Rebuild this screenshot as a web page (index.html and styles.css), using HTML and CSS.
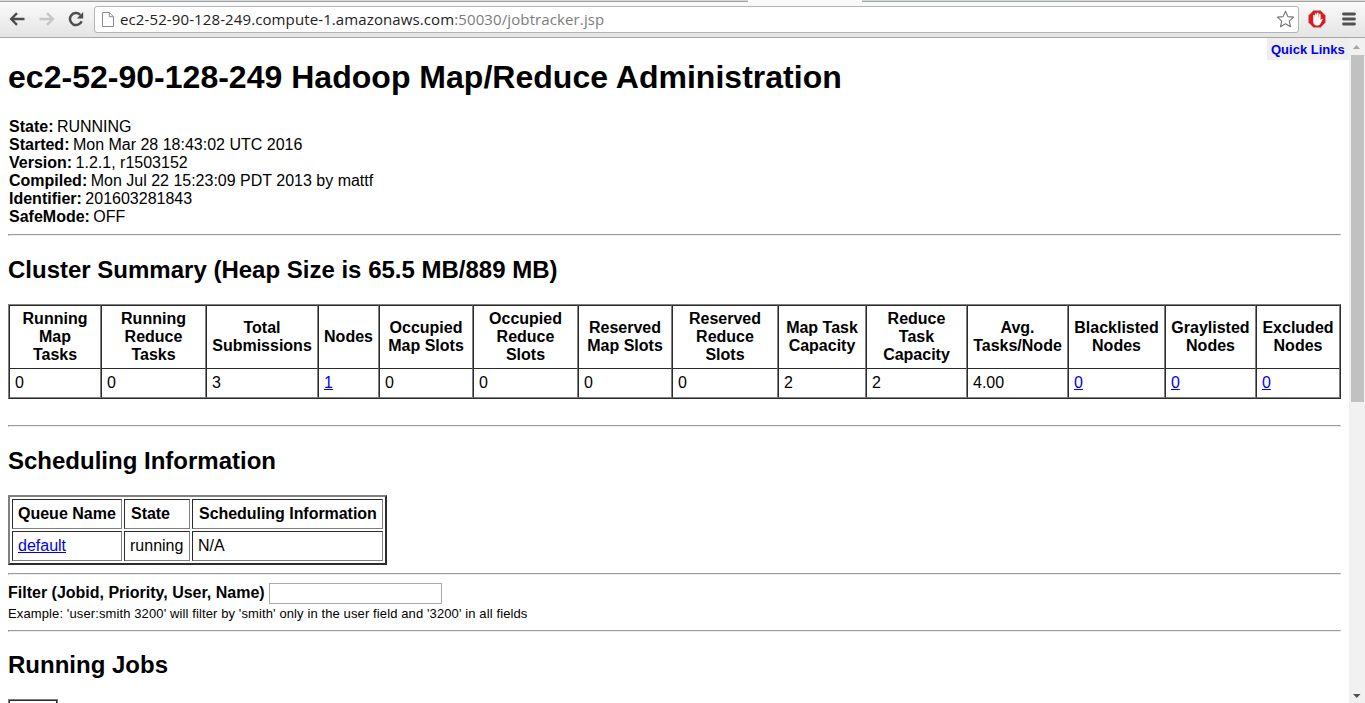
FILE: index.html
```html
<!DOCTYPE html>
<html lang="en">
<head>
<meta charset="utf-8">
<title>ec2-52-90-128-249 Hadoop Map/Reduce Administration</title>
<link rel="stylesheet" href="styles.css">
</head>
<body>
<div class="tabstrip"><span class="tabs tabs-left"></span><span class="tab-active"></span><span class="tabs tabs-right"></span><span class="tab-rest"></span></div>
<header class="toolbar">
  <svg class="nav" width="16" height="16" viewBox="0 0 16 16"><path d="M15.500 8H2.5M8 2.2L2.2 8L8 13.8" fill="none" stroke="#4d4d4d" stroke-width="2.4"/></svg>
  <svg class="nav forward" width="16" height="16" viewBox="0 0 16 16"><path d="M.5 8h13M8 2.2L13.8 8L8 13.8" fill="none" stroke="#c6c6c6" stroke-width="2.4"/></svg>
  <svg class="nav reload" width="16" height="16" viewBox="0 0 16 16"><path d="M13.6 10.2A6 6 0 1 1 12.2 3.8" fill="none" stroke="#4d4d4d" stroke-width="2.5"/><path d="M15.2 1v6.4H8.8z" fill="#4d4d4d"/></svg>
  <div class="address">
    <svg class="page-icon" width="12" height="15" viewBox="0 0 12 15"><path d="M.5.5h6.8l4.2 4.2v9.8H.5zM7.3.5v4.2h4.2" fill="#fff" stroke="#8b8b8b"/></svg>
    <span class="url"><span class="host">ec2-52-90-128-249.compute-1.amazonaws.com</span>:50030/jobtracker.jsp</span>
    <svg class="star" width="19" height="18" viewBox="0 0 19 18"><path d="M9.5 1.2l2.4 5.4 5.7.5-4.3 4 1.3 5.7-5.1-3-5.1 3 1.3-5.7-4.3-4 5.7-.5z" fill="#fff" stroke="#777" stroke-width="1.1" stroke-linejoin="round"/></svg>
  </div>
  <svg class="blocker" width="18" height="18" viewBox="0 0 18 18"><path d="M5.4.5h7.2l4.9 5v7l-4.9 5H5.4l-4.9-5v-7z" fill="#e2191c" stroke="#b9a5a0" stroke-width=".7"/><path d="M5.2 9V5.2q.8-1 1.5 0V8l.4-4.4q.8-.9 1.5 0V7.5l.5-4.7q.8-.7 1.5 0v5l.6-3.8q.8-.6 1.4.1v6.2l1.1-1.6q1-.3 1 .7l-2.6 4.800q-.8 1.300-2.700 1.300-3.200 0-4.200-2.800z" fill="#fff"/></svg>
  <svg class="menu" width="14" height="14" viewBox="0 0 14 14"><path d="M1.500 2h11M1.500 7h11M1.500 12h11" stroke="#505050" stroke-width="2.800" stroke-linecap="round"/></svg>
</header>
<div class="viewport">
  <main class="page">
    <a class="quicklinks">Quick Links</a>
    <h1><span class="title">ec2-52-90-128-249 Hadoop Map/Reduce Administration</span></h1>
    <div class="info">
      <div><b>State:</b> RUNNING</div>
      <div><b>Started:</b> Mon Mar 28 18:43:02 UTC 2016</div>
      <div><b>Version:</b> 1.2.1, r1503152</div>
      <div><b>Compiled:</b> Mon Jul 22 15:23:09 PDT 2013 by mattf</div>
      <div><b>Identifier:</b> 201603281843</div>
      <div><b>SafeMode:</b> OFF</div>
    </div>
    <hr>
    <h2 class="h-cluster">Cluster Summary (Heap Size is 65.5 MB/889 MB)</h2>
    <table class="summary">
      <colgroup><col class="w92"><col class="w105"><col class="w112"><col class="w61"><col class="w94"><col class="w105"><col class="w94"><col class="w106"><col class="w88"><col class="w101"><col class="w101"><col class="w97"><col class="w91"><col class="w84"></colgroup>
      <tr class="head"><th>Running<br>Map<br>Tasks</th><th>Running<br>Reduce<br>Tasks</th><th>Total<br>Submissions</th><th>Nodes</th><th>Occupied<br>Map Slots</th><th>Occupied<br>Reduce<br>Slots</th><th>Reserved<br>Map Slots</th><th>Reserved<br>Reduce<br>Slots</th><th>Map Task<br>Capacity</th><th>Reduce<br>Task<br>Capacity</th><th>Avg.<br>Tasks/Node</th><th>Blacklisted<br>Nodes</th><th>Graylisted<br>Nodes</th><th>Excluded<br>Nodes</th></tr>
      <tr class="values"><td>0</td><td>0</td><td>3</td><td><a href="#">1</a></td><td>0</td><td>0</td><td>0</td><td>0</td><td>2</td><td>2</td><td>4.00</td><td><a href="#">0</a></td><td><a href="#">0</a></td><td><a href="#">0</a></td></tr>
    </table>
    <hr class="after-summary">
    <h2 class="h-sched">Scheduling Information</h2>
    <table class="queues">
      <colgroup><col class="w110"><col class="w66"><col class="w191"></colgroup>
      <tr><th>Queue Name</th><th class="nudged">State</th><th class="nudged">Scheduling Information</th></tr>
      <tr><td><a href="#">default</a></td><td>running</td><td>N/A</td></tr>
    </table>
    <hr>
    <div class="filter"><b>Filter (Jobid, Priority, User, Name)</b><input type="text"></div>
    <div class="example">Example: 'user:smith 3200' will filter by 'smith' only in the user field and '3200' in all fields</div>
    <hr class="after-example">
    <h2 class="h-running">Running Jobs</h2>
    <div class="jobs"></div>
  </main>
  <aside class="scrollbar">
    <svg width="16" height="17" viewBox="0 0 16 17"><path d="M4 11h7L7.500 7z" fill="#a3a3a3"/></svg>
    <div class="thumb"></div>
    <svg class="down" width="16" height="17" viewBox="0 0 16 17"><path d="M4 8h7.500l-3.750 4z" fill="#505050"/></svg>
  </aside>
</div>
</body>
</html>
```
FILE: styles.css
```css
* { box-sizing: border-box; }
body { margin: 0; height: 703px; overflow: hidden; background: #fff; color: #000; font: 16px/18px "Liberation Sans", Arial, sans-serif; }
.tabstrip { height: 2px; display: flex; background: #d6dadc; border-bottom: 1px solid #a0a3a3; }
.tabs-left { width: 748px; }
.tab-active { width: 114px; height: 2px; background: #fafafa; }
.tabs-right { width: 216px; background: #d2dade; }
.tab-rest { flex: 1; background: #dadad2; }
.toolbar { height: 36px; display: flex; align-items: center; padding: 0 9px 1px 9px; background: linear-gradient(#fafafa, #e4e4e4); border-bottom: 1px solid #a6a6a6; }
.nav { margin-right: 14px; flex: none; }
.nav.forward { margin-right: 13px; }
.nav.reload { margin-right: 10px; }
.address { width: 1205px; height: 27px; display: flex; align-items: center; background: #fff; border: 1px solid #b4b4b4; border-radius: 3px; padding: 0 3px 0 7px; }
.url { margin-left: 6px; padding-bottom: 1px; flex: 1; font: 15px/20px "Open Sans", "Noto Sans", sans-serif; letter-spacing: 0.11px; color: #7c7c7c; white-space: nowrap; }
.host { color: #222; }
.blocker { margin-left: 9px; flex: none; }
.menu { margin-left: 16px; flex: none; }
.viewport { height: 665px; display: flex; }
.page { width: 1349px; padding: 0 8px; position: relative; overflow: hidden; }
.quicklinks { position: absolute; top: 0; right: 0; width: 82px; height: 22px; padding: 4px 4px 2px; background: #eee; color: #00e; font-weight: bold; font-size: 13px; line-height: 16px; white-space: nowrap; }
h1 { margin: 21px 0 22px; font-size: 32px; line-height: 37px; letter-spacing: 0.02px; white-space: nowrap; }
.info { padding-left: 1px; }
.info b { margin-right: -1px; }
hr { margin: 8px 0; height: 2px; border: 1px solid #eee; border-top-color: #9a9a9a; border-left-color: #9a9a9a; }
h2 { margin: 20px 0; font-size: 24px; line-height: 28px; white-space: nowrap; }
a { color: #00e; }
table { table-layout: fixed; }
th, td { padding: 0 5px; white-space: nowrap; }
td { text-align: left; }
.summary { width: 1333px; border-collapse: separate; border-spacing: 0; border: 1px solid; border-color: #808080 #2b2b2b #2b2b2b #808080; }
.summary th, .summary td { border: 1px solid; border-color: #2b2b2b #808080 #808080 #2b2b2b; }
.summary .head { height: 63px; }
.summary .head th { border-bottom: 0; padding: 0; }
.summary .values { height: 30px; }
.queues { width: 379px; border-collapse: separate; border-spacing: 2px; border: 2px solid; border-color: #808080 #2b2b2b #2b2b2b #808080; }
.queues tr { height: 30px; }
.queues th, .queues td { border: 1px solid; border-color: #2b2b2b #808080 #808080 #2b2b2b; text-align: left; }
.queues .nudged { padding: 0 4px 0 6px; letter-spacing: -0.04px; }
.w61 { width: 61px; } .w66 { width: 66px; } .w84 { width: 84px; } .w88 { width: 88px; }
.w91 { width: 91px; } .w92 { width: 92px; } .w94 { width: 94px; } .w97 { width: 97px; }
.w101 { width: 101px; } .w105 { width: 105px; } .w106 { width: 106px; } .w110 { width: 110px; }
.w112 { width: 112px; } .w191 { width: 191px; }
.after-summary { margin-top: 26px; }
.filter { display: flex; align-items: center; height: 21px; }
.filter b { padding-bottom: 2px; }
.filter input { width: 173px; height: 21px; margin: 0 0 0 4px; padding: 0; border: 1px solid #a9a9a9; background: #fff; }
.example { padding-top: 1px; font-size: 13px; line-height: 17px; letter-spacing: 0.114px; }
.h-running { margin-top: 19px; }
.jobs { width: 50px; height: 30px; border: 1px solid #808080; box-shadow: inset 0 0 0 1px #2b2b2b; }
.scrollbar { width: 16px; background: #f1f1f1; display: flex; flex-direction: column; }
.thumb { height: 347px; margin: 0 1px 0 2px; background: #c1c1c1; }
.down { margin-top: auto; }
```
